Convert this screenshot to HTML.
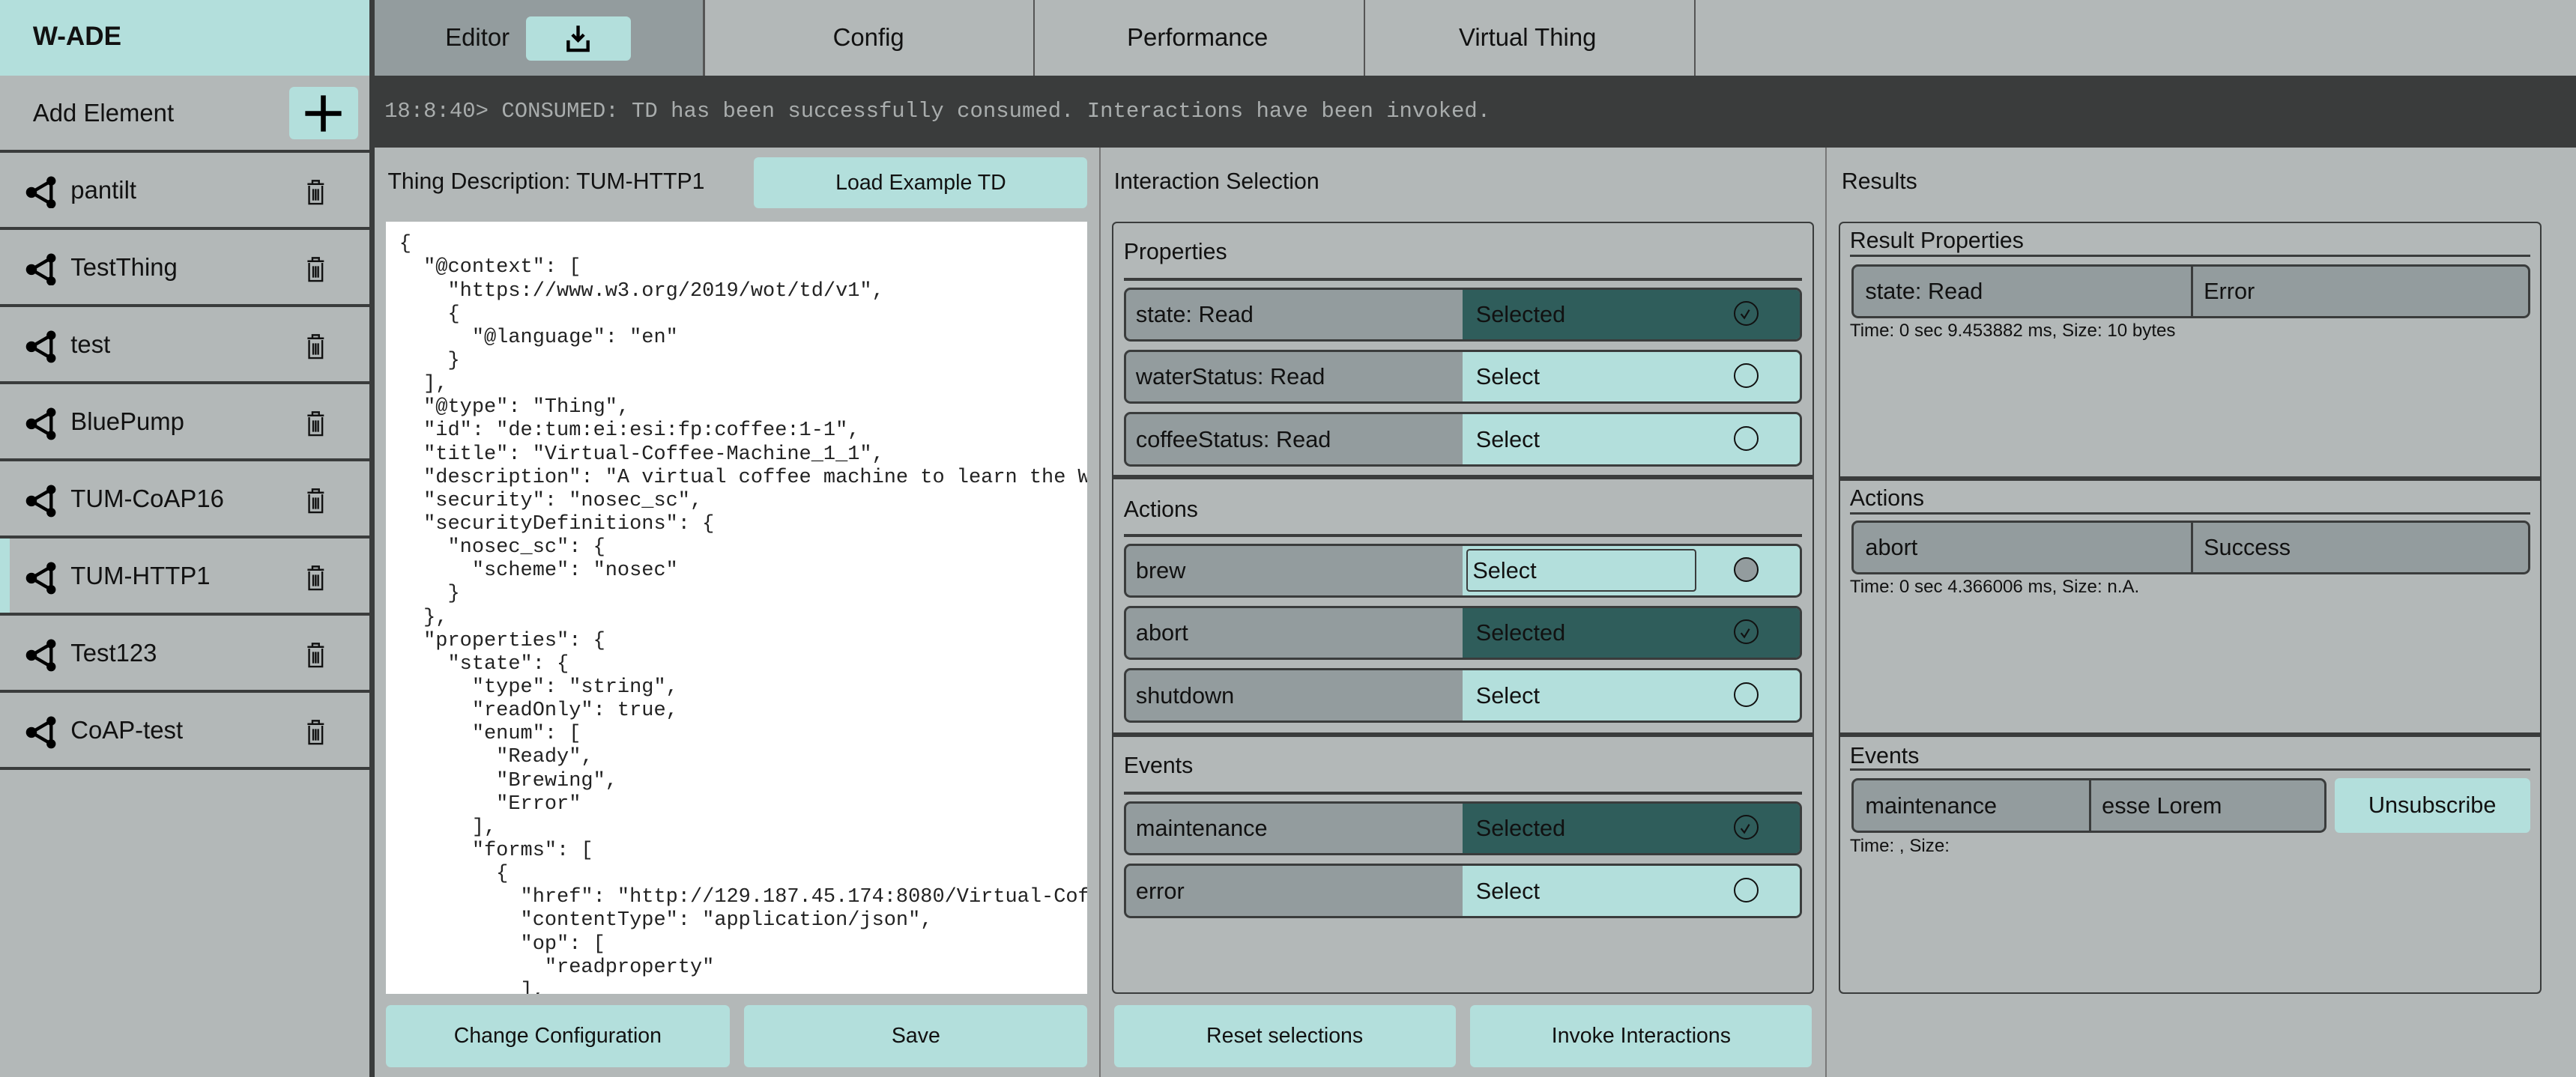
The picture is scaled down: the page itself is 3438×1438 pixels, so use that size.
<!DOCTYPE html>
<html><head><meta charset="utf-8"><style>
html,body{margin:0;padding:0;width:3438px;height:1438px;overflow:hidden;background:#b3b8b8}
#r{zoom:2.19260;position:relative;width:1568px;height:656px;font-family:"Liberation Sans",sans-serif;color:#111;font-size:15px}
.a{position:absolute;box-sizing:border-box}
.t{position:absolute;white-space:nowrap}
.btn{position:absolute;background:#b3dfdc;border-radius:3px;display:flex;align-items:center;justify-content:center;font-size:13px;box-sizing:border-box}
.row{position:absolute;left:684px;width:413px;height:33px;border:1.5px solid #3a3c3c;border-radius:4px;background:#939c9e;box-sizing:border-box;overflow:hidden}
.row .l{position:absolute;left:6px;top:7px;font-size:14px}
.row .rr{position:absolute;left:205px;top:0;right:0;bottom:0;background:#b3dfdc}
.row .rr.s{background:#2f5d5b}
.row .rr span{position:absolute;left:8px;top:7px;font-size:14px}
.row .c{position:absolute;left:165px;top:7px;width:15px;height:15px;border:1.2px solid #111;border-radius:50%;box-sizing:border-box}
.line{position:absolute;height:2px;background:#3a3c3c}
.res{position:absolute;height:33px;border:1.5px solid #3a3c3c;border-radius:4px;background:#939c9e;box-sizing:border-box}
.res span{position:absolute;top:7px;font-size:14px}
pre{margin:0;font-family:"Liberation Mono",monospace;font-size:12.3px;line-height:14.2px;color:#222}
.sb{position:absolute;left:0;width:225px;height:47px;border-bottom:2px solid #3a3c3c;box-sizing:border-box}
.sb .n{position:absolute;left:43px;top:14px;font-size:15px}
.h{font-size:13.8px}
</style></head><body><div id="r">
<div class="a" style="left:0;top:0;width:225px;height:46px;background:#b3dfdc"></div>
<div class="t" style="left:20px;top:13px;font-weight:bold;font-size:16px">W-ADE</div>
<div class="t" style="left:20px;top:60px;font-size:15px">Add Element</div>
<div class="btn" style="left:176px;top:53px;width:42px;height:32px"><svg width="26" height="26" viewBox="0 0 26 26"><path d="M13 2V24M2 13H24" stroke="#000" stroke-width="3"/></svg></div>
<div class="a" style="left:0;top:91px;width:225px;height:2px;background:#3a3c3c"></div>
<div class="a" style="left:225px;top:0;width:3px;height:656px;background:#3a3c3c"></div>
<div class="a" style="left:228px;top:0;width:200px;height:46px;background:#939c9e"></div>
<div class="t" style="left:271px;top:14px">Editor</div>
<div class="btn" style="left:320px;top:10px;width:64px;height:27px"><svg width="16" height="18" viewBox="0 0 16 18"><path d="M8 1V10M4.5 6.5L8 10L11.5 6.5M2 10V16H14V10" fill="none" stroke="#000" stroke-width="2"/></svg></div>
<div class="a" style="left:428px;top:0;width:1px;height:46px;background:#555"></div>
<div class="t" style="left:507px;top:14px">Config</div>
<div class="a" style="left:629px;top:0;width:1px;height:46px;background:#555"></div>
<div class="t" style="left:686px;top:14px">Performance</div>
<div class="a" style="left:830px;top:0;width:1px;height:46px;background:#555"></div>
<div class="t" style="left:888px;top:14px">Virtual Thing</div>
<div class="a" style="left:1031px;top:0;width:1px;height:46px;background:#555"></div>
<div class="a" style="left:228px;top:46px;width:1340px;height:44px;background:#3a3c3c"></div>
<div class="t" style="left:234px;top:60px;font-family:'Liberation Mono',monospace;font-size:13.2px;color:#a9adad">18:8:40&gt; CONSUMED: TD has been successfully consumed. Interactions have been invoked.</div>
<div class="a" style="left:669px;top:90px;width:1px;height:566px;background:#777"></div>
<div class="a" style="left:1111px;top:90px;width:1px;height:566px;background:#777"></div>
<div class="t h" style="left:236px;top:103px">Thing Description: TUM-HTTP1</div>
<div class="btn" style="left:459px;top:96px;width:203px;height:31px">Load Example TD</div>
<div class="a" style="left:235px;top:135px;width:427px;height:470px;background:#fff;overflow:hidden;padding:7px 0 0 8px"><pre>{
  "@context": [
    "https://www.w3.org/2019/wot/td/v1",
    {
      "@language": "en"
    }
  ],
  "@type": "Thing",
  "id": "de:tum:ei:esi:fp:coffee:1-1",
  "title": "Virtual-Coffee-Machine_1_1",
  "description": "A virtual coffee machine to learn the WoT",
  "security": "nosec_sc",
  "securityDefinitions": {
    "nosec_sc": {
      "scheme": "nosec"
    }
  },
  "properties": {
    "state": {
      "type": "string",
      "readOnly": true,
      "enum": [
        "Ready",
        "Brewing",
        "Error"
      ],
      "forms": [
        {
          "href": "http://129.187.45.174:8080/Virtual-Coffee",
          "contentType": "application/json",
          "op": [
            "readproperty"
          ],</pre></div>
<div class="btn" style="left:235px;top:612px;width:209px;height:38px">Change Configuration</div>
<div class="btn" style="left:453px;top:612px;width:209px;height:38px">Save</div>
<div class="t h" style="left:678px;top:103px">Interaction Selection</div>
<div class="a" style="left:677px;top:135px;width:427px;height:470px;border:1px solid #3a3c3c;border-radius:3px"></div>
<div class="t h" style="left:684px;top:146px">Properties</div>
<div class="line" style="left:684px;top:169px;width:413px"></div>
<div class="row" style="top:175px"><span class="l">state: Read</span><div class="rr s"><span>Selected</span><div class="c"><svg width="12" height="12" viewBox="0 0 12 12" style="position:absolute;left:0;top:1px"><path d="M3.5 6L5.5 8.5L8.5 3.5" fill="none" stroke="#111" stroke-width="1"/></svg></div></div></div>
<div class="row" style="top:213px"><span class="l">waterStatus: Read</span><div class="rr"><span>Select</span><div class="c"></div></div></div>
<div class="row" style="top:251px"><span class="l">coffeeStatus: Read</span><div class="rr"><span>Select</span><div class="c"></div></div></div>
<div class="a" style="left:677px;top:289px;width:427px;height:3px;background:#3a3c3c"></div>
<div class="t h" style="left:684px;top:303px">Actions</div>
<div class="line" style="left:684px;top:325px;width:413px"></div>
<div class="row" style="top:331px"><span class="l">brew</span><div class="rr"><div style="position:absolute;left:2px;top:2px;width:140px;height:26px;border:1.2px solid #3a3c3c;border-radius:2px;box-sizing:border-box"></div><span style="left:6px">Select</span><div class="c" style="background:#939c9e"></div></div></div>
<div class="row" style="top:369px"><span class="l">abort</span><div class="rr s"><span>Selected</span><div class="c"><svg width="12" height="12" viewBox="0 0 12 12" style="position:absolute;left:0;top:1px"><path d="M3.5 6L5.5 8.5L8.5 3.5" fill="none" stroke="#111" stroke-width="1"/></svg></div></div></div>
<div class="row" style="top:407px"><span class="l">shutdown</span><div class="rr"><span>Select</span><div class="c"></div></div></div>
<div class="a" style="left:677px;top:446px;width:427px;height:3px;background:#3a3c3c"></div>
<div class="t h" style="left:684px;top:459px">Events</div>
<div class="line" style="left:684px;top:482px;width:413px"></div>
<div class="row" style="top:488px"><span class="l">maintenance</span><div class="rr s"><span>Selected</span><div class="c"><svg width="12" height="12" viewBox="0 0 12 12" style="position:absolute;left:0;top:1px"><path d="M3.5 6L5.5 8.5L8.5 3.5" fill="none" stroke="#111" stroke-width="1"/></svg></div></div></div>
<div class="row" style="top:526px"><span class="l">error</span><div class="rr"><span>Select</span><div class="c"></div></div></div>
<div class="btn" style="left:678px;top:612px;width:208px;height:38px">Reset selections</div>
<div class="btn" style="left:895px;top:612px;width:208px;height:38px">Invoke Interactions</div>
<div class="t h" style="left:1121px;top:103px">Results</div>
<div class="a" style="left:1119px;top:135px;width:428px;height:470px;border:1px solid #3a3c3c;border-radius:3px"></div>
<div class="t h" style="left:1126px;top:139px">Result Properties</div>
<div class="line" style="left:1126px;top:155px;width:414px;height:1.5px"></div>
<div class="res" style="left:1127px;top:161px;width:413px"><span style="left:7px">state: Read</span><div style="position:absolute;left:205px;top:0;bottom:0;width:1.5px;background:#3a3c3c"></div><span style="left:213px">Error</span></div>
<div class="t" style="left:1126px;top:195px;font-size:11px">Time: 0 sec 9.453882 ms, Size: 10 bytes</div>
<div class="a" style="left:1119px;top:290px;width:428px;height:3px;background:#3a3c3c"></div>
<div class="t h" style="left:1126px;top:296px">Actions</div>
<div class="line" style="left:1126px;top:312px;width:414px;height:1.5px"></div>
<div class="res" style="left:1127px;top:317px;width:413px"><span style="left:7px">abort</span><div style="position:absolute;left:205px;top:0;bottom:0;width:1.5px;background:#3a3c3c"></div><span style="left:213px">Success</span></div>
<div class="t" style="left:1126px;top:351px;font-size:11px">Time: 0 sec 4.366006 ms, Size: n.A.</div>
<div class="a" style="left:1119px;top:446px;width:428px;height:3px;background:#3a3c3c"></div>
<div class="t h" style="left:1126px;top:453px">Events</div>
<div class="line" style="left:1126px;top:468px;width:414px;height:1.5px"></div>
<div class="res" style="left:1127px;top:474px;width:289px"><span style="left:7px">maintenance</span><div style="position:absolute;left:143px;top:0;bottom:0;width:1.5px;background:#3a3c3c"></div><span style="left:151px">esse Lorem</span></div>
<div class="btn" style="left:1421px;top:474px;width:119px;height:33px;font-size:14px">Unsubscribe</div>
<div class="t" style="left:1126px;top:509px;font-size:11px">Time: , Size:</div>

<div class="sb" style="top:93px"><svg class="a" style="left:14px;top:14px" width="22" height="20" viewBox="0 0 22 20"><path d="M17 3L5 10L17 17Z" fill="none" stroke="#000" stroke-width="2"/><circle cx="17" cy="3" r="2.8"/><circle cx="5" cy="10" r="3.3"/><circle cx="17" cy="17" r="2.8"/></svg><span class="n">pantilt</span><svg class="a" style="left:185px;top:15px" width="14" height="18" viewBox="0 0 14 18"><path d="M2 4H12M5 4V2H9V4M3 5V16H11V5M5.5 7V14M7 7V14M8.5 7V14" fill="none" stroke="#111" stroke-width="1.1"/></svg></div>
<div class="sb" style="top:140px"><svg class="a" style="left:14px;top:14px" width="22" height="20" viewBox="0 0 22 20"><path d="M17 3L5 10L17 17Z" fill="none" stroke="#000" stroke-width="2"/><circle cx="17" cy="3" r="2.8"/><circle cx="5" cy="10" r="3.3"/><circle cx="17" cy="17" r="2.8"/></svg><span class="n">TestThing</span><svg class="a" style="left:185px;top:15px" width="14" height="18" viewBox="0 0 14 18"><path d="M2 4H12M5 4V2H9V4M3 5V16H11V5M5.5 7V14M7 7V14M8.5 7V14" fill="none" stroke="#111" stroke-width="1.1"/></svg></div>
<div class="sb" style="top:187px"><svg class="a" style="left:14px;top:14px" width="22" height="20" viewBox="0 0 22 20"><path d="M17 3L5 10L17 17Z" fill="none" stroke="#000" stroke-width="2"/><circle cx="17" cy="3" r="2.8"/><circle cx="5" cy="10" r="3.3"/><circle cx="17" cy="17" r="2.8"/></svg><span class="n">test</span><svg class="a" style="left:185px;top:15px" width="14" height="18" viewBox="0 0 14 18"><path d="M2 4H12M5 4V2H9V4M3 5V16H11V5M5.5 7V14M7 7V14M8.5 7V14" fill="none" stroke="#111" stroke-width="1.1"/></svg></div>
<div class="sb" style="top:234px"><svg class="a" style="left:14px;top:14px" width="22" height="20" viewBox="0 0 22 20"><path d="M17 3L5 10L17 17Z" fill="none" stroke="#000" stroke-width="2"/><circle cx="17" cy="3" r="2.8"/><circle cx="5" cy="10" r="3.3"/><circle cx="17" cy="17" r="2.8"/></svg><span class="n">BluePump</span><svg class="a" style="left:185px;top:15px" width="14" height="18" viewBox="0 0 14 18"><path d="M2 4H12M5 4V2H9V4M3 5V16H11V5M5.5 7V14M7 7V14M8.5 7V14" fill="none" stroke="#111" stroke-width="1.1"/></svg></div>
<div class="sb" style="top:281px"><svg class="a" style="left:14px;top:14px" width="22" height="20" viewBox="0 0 22 20"><path d="M17 3L5 10L17 17Z" fill="none" stroke="#000" stroke-width="2"/><circle cx="17" cy="3" r="2.8"/><circle cx="5" cy="10" r="3.3"/><circle cx="17" cy="17" r="2.8"/></svg><span class="n">TUM-CoAP16</span><svg class="a" style="left:185px;top:15px" width="14" height="18" viewBox="0 0 14 18"><path d="M2 4H12M5 4V2H9V4M3 5V16H11V5M5.5 7V14M7 7V14M8.5 7V14" fill="none" stroke="#111" stroke-width="1.1"/></svg></div>
<div class="sb" style="top:328px"><div class="a" style="left:0;top:0;width:6px;height:45px;background:#b3dfdc"></div><svg class="a" style="left:14px;top:14px" width="22" height="20" viewBox="0 0 22 20"><path d="M17 3L5 10L17 17Z" fill="none" stroke="#000" stroke-width="2"/><circle cx="17" cy="3" r="2.8"/><circle cx="5" cy="10" r="3.3"/><circle cx="17" cy="17" r="2.8"/></svg><span class="n">TUM-HTTP1</span><svg class="a" style="left:185px;top:15px" width="14" height="18" viewBox="0 0 14 18"><path d="M2 4H12M5 4V2H9V4M3 5V16H11V5M5.5 7V14M7 7V14M8.5 7V14" fill="none" stroke="#111" stroke-width="1.1"/></svg></div>
<div class="sb" style="top:375px"><svg class="a" style="left:14px;top:14px" width="22" height="20" viewBox="0 0 22 20"><path d="M17 3L5 10L17 17Z" fill="none" stroke="#000" stroke-width="2"/><circle cx="17" cy="3" r="2.8"/><circle cx="5" cy="10" r="3.3"/><circle cx="17" cy="17" r="2.8"/></svg><span class="n">Test123</span><svg class="a" style="left:185px;top:15px" width="14" height="18" viewBox="0 0 14 18"><path d="M2 4H12M5 4V2H9V4M3 5V16H11V5M5.5 7V14M7 7V14M8.5 7V14" fill="none" stroke="#111" stroke-width="1.1"/></svg></div>
<div class="sb" style="top:422px"><svg class="a" style="left:14px;top:14px" width="22" height="20" viewBox="0 0 22 20"><path d="M17 3L5 10L17 17Z" fill="none" stroke="#000" stroke-width="2"/><circle cx="17" cy="3" r="2.8"/><circle cx="5" cy="10" r="3.3"/><circle cx="17" cy="17" r="2.8"/></svg><span class="n">CoAP-test</span><svg class="a" style="left:185px;top:15px" width="14" height="18" viewBox="0 0 14 18"><path d="M2 4H12M5 4V2H9V4M3 5V16H11V5M5.5 7V14M7 7V14M8.5 7V14" fill="none" stroke="#111" stroke-width="1.1"/></svg></div>
</div></body></html>
